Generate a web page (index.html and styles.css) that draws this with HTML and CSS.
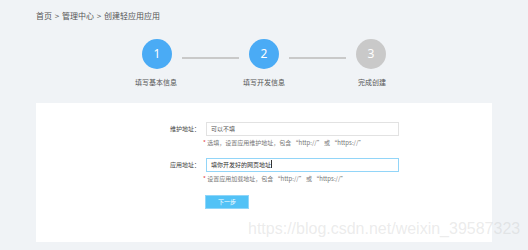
FILE: index.html
```html
<!DOCTYPE html>
<html lang="zh-CN">
<head>
  <meta charset="UTF-8" />
  <title>创建轻应用</title>
  <link rel="stylesheet" href="styles.css">
</head>
<body>
  <div class="page">
    <div class="breadcrumb">首页 &gt; 管理中心 &gt; 创建轻应用应用</div>

    <div class="steps">
      <div class="circle active">1</div>
      <div class="line"></div>
      <div class="circle active">2</div>
      <div class="line"></div>
      <div class="circle">3</div>
    </div>
    <div class="step-labels">
      <div class="step-label">填写基本信息</div>
      <div class="step-label">填写开发信息</div>
      <div class="step-label">完成创建</div>
    </div>

    <div class="panel">
      <div class="form">
        <label class="form-label">维护地址：</label>
        <div class="field">
          <div class="input">可以不填</div>
          <div class="hint"><span class="star">*</span> 选填，设置应用维护地址，包含 “http://” 或 “https://”</div>
        </div>

        <label class="form-label">应用地址：</label>
        <div class="field">
          <div class="input focused">填你开发好的网页地址<span class="caret"></span></div>
          <div class="hint"><span class="star">*</span> 设置应用加载地址，包含 “http://” 或 “https://”</div>
        </div>

        <div></div>
        <div class="field">
          <button class="btn">下一步</button>
        </div>
      </div>
    </div>
  </div>

  <div class="watermark">https://blog.csdn.net/weixin_39587323</div>
</body>
</html>
```

FILE: styles.css
```css
body {
  margin: 0;
  background: #f0f3f6;
  font-family: "Noto Sans CJK SC", "Noto Sans", sans-serif;
  color: #555;
}

.page {
  padding: 10px 36px 7px;
}

.breadcrumb {
  font-size: 8px;
  line-height: 12px;
  color: #555;
  word-spacing: 1px;
}

.steps {
  display: flex;
  justify-content: center;
  align-items: flex-start;
  gap: 10px;
  margin-top: 17px;
}

.circle {
  width: 30px;
  height: 30px;
  border-radius: 50%;
  background: #c9c9c9;
  color: #fff;
  font-family: "Noto Sans", sans-serif;
  font-size: 12px;
  line-height: 30px;
  text-align: center;
}

.circle.active {
  background: #4aabf5;
}

.line {
  width: 57px;
  height: 2px;
  margin-top: 18px;
  background: #c9c9c9;
}

.step-labels {
  display: flex;
  justify-content: center;
  margin-top: 8px;
}

.step-label {
  width: 108px;
  text-align: center;
  font-size: 7px;
  line-height: 10px;
  color: #555;
}

.panel {
  margin-top: 16px;
  background: #fff;
  height: 139px;
  box-sizing: border-box;
  padding-top: 19px;
}

.form {
  display: grid;
  grid-template-columns: 164px 193px;
  column-gap: 6px;
  align-items: start;
}

.form-label {
  text-align: right;
  font-size: 6px;
  line-height: 14px;
  color: #444;
}

.field {
  display: flex;
  flex-direction: column;
}

.input {
  height: 14px;
  box-sizing: border-box;
  border: 1px solid #e2e2e2;
  padding-left: 4px;
  font-size: 6px;
  line-height: 12px;
  color: #555;
}

.input.focused {
  border-color: #92d5f8;
  color: #333;
}

.caret {
  display: inline-block;
  width: 1px;
  height: 8px;
  background: #333;
  vertical-align: -1px;
}

.hint {
  margin: 2px 0 10px -3px;
  font-size: 6px;
  line-height: 10px;
  color: #777;
}

.star {
  color: #e4393c;
}

.btn {
  width: 44px;
  height: 14px;
  margin-top: 1px;
  margin-left: -1px;
  padding: 0;
  border: 1px solid #8fd6fa;
  background: #52c2f6;
  color: #fff;
  font-family: "Noto Sans CJK SC", sans-serif;
  font-size: 6px;
  line-height: 12px;
}

.watermark {
  position: absolute;
  left: 248px;
  top: 220px;
  font-family: "Liberation Sans", Arial, sans-serif;
  font-size: 16px;
  color: rgba(190, 190, 190, 0.3);
  white-space: nowrap;
}
```
